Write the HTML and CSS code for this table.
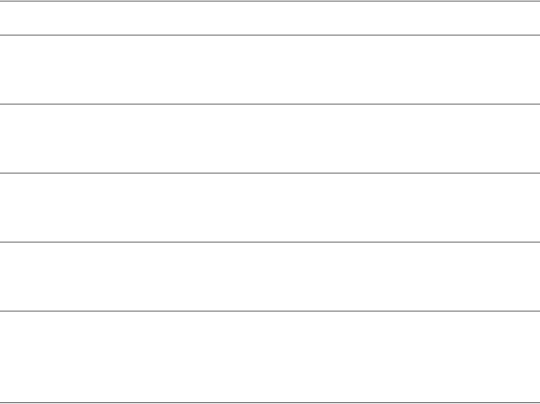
FILE: index.html
```html
<!DOCTYPE html>
<html>
<head>
<meta charset="utf-8">
<link rel="stylesheet" href="styles.css">
</head>
<body>
<div class="table">
  <div class="sep"></div>
  <div class="row row-head"></div>
  <div class="sep"></div>
  <div class="row"></div>
  <div class="sep"></div>
  <div class="row"></div>
  <div class="sep"></div>
  <div class="row"></div>
  <div class="sep"></div>
  <div class="row"></div>
  <div class="sep"></div>
  <div class="row row-last"></div>
  <div class="sep sep-bottom"></div>
</div>
</body>
</html>
```
FILE: styles.css
```css
html, body {
  margin: 0;
  padding: 0;
  background: #ffffff;
  font-family: "Liberation Sans", Arial, sans-serif;
}
.table {
  display: flex;
  flex-direction: column;
  width: 540px;
}
.sep {
  height: 0;
  border-top: 1px solid #c6c6c6;
  border-bottom: 1px solid #a6a6a6;
}
.sep-bottom {
  border-top: 1px solid #808080;
  border-bottom: 1px solid #e2e2e2;
}
.row {
  height: 67px;
}
.row-head {
  height: 32px;
}
.row-last {
  height: 90px;
}
```
